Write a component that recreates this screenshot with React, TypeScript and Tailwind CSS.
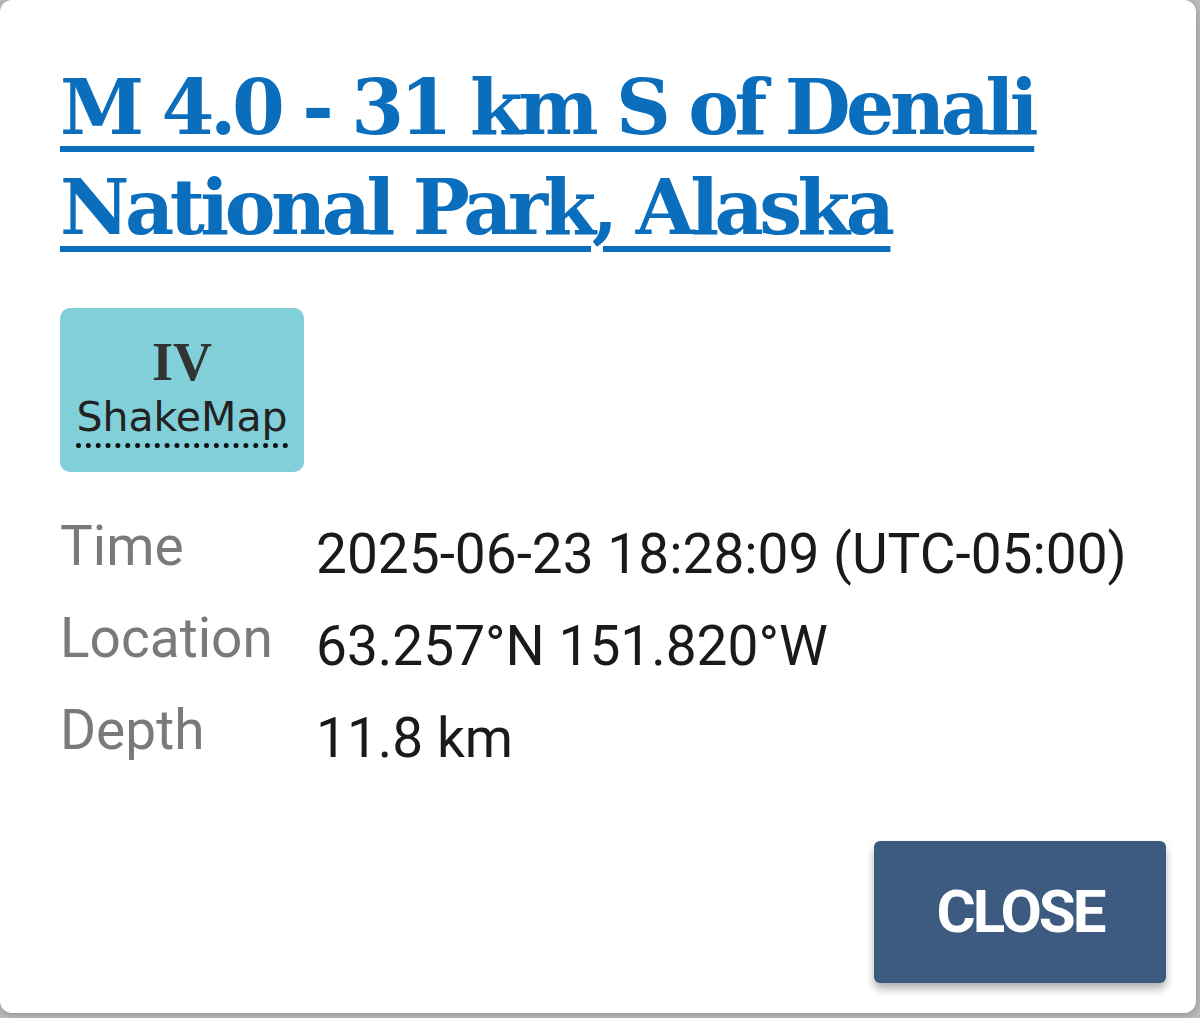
import React from 'react';

const rows = [
  { label: 'Time', value: '2025-06-23 18:28:09 (UTC-05:00)' },
  { label: 'Location', value: '63.257°N 151.820°W' },
  { label: 'Depth', value: '11.8 km' },
];

const App: React.FC = () => {
  return (
    <div className="w-[1200px] h-[1018px] bg-[#bdbdbd] overflow-hidden flex flex-col">
      <div className="w-[1196px] h-[1013px] shrink-0 bg-white rounded-[12px] shadow-[0_2px_8px_rgba(0,0,0,0.25)] px-[60px] pt-[58px] flex flex-col">
        <a
          href="#"
          className="block text-[#0a6ebd] underline decoration-[6px] underline-offset-[12px] font-bold text-[76px] leading-[100px] tracking-[-4.5px]"
          style={{ fontFamily: '"DejaVu Serif", serif' }}
        >
          M 4.0 - 31 km S of Denali National Park, Alaska
        </a>

        <div className="mt-[50px] shrink-0 w-[244px] h-[164px] rounded-[10px] bg-[#80cfd9] flex flex-col items-center justify-center">
          <span
            className="text-[54px] leading-[58px] font-bold text-[#333]"
            style={{ fontFamily: '"Liberation Serif", serif' }}
          >
            IV
          </span>
          <abbr
            title="ShakeMap"
            className="text-[41px] leading-[52px] text-[#222] border-b-[5px] border-dotted border-[#111]"
            style={{ fontFamily: '"DejaVu Sans", sans-serif', textDecoration: 'none' }}
          >
            ShakeMap
          </abbr>
        </div>

        <dl
          className="mt-[38px] grid grid-cols-[256px_1fr] gap-y-[12px] whitespace-nowrap"
          style={{ fontFamily: 'Roboto, sans-serif' }}
        >
          {rows.map((r) => (
            <React.Fragment key={r.label}>
              <dt className="text-[55px] leading-[72px] text-[#7a7a7a]">{r.label}</dt>
              <dd className="text-[55px] leading-[72px] text-[#1a1a1a] pt-[8px]">{r.value}</dd>
            </React.Fragment>
          ))}
        </dl>

        <div className="flex-1 flex items-end justify-end pb-[30px] -mr-[30px]">
          <button
            className="w-[292px] h-[142px] rounded-[6px] bg-[#3d5a80] text-white text-[60px] font-bold tracking-[-3px] shadow-[0_6px_8px_rgba(0,0,0,0.3)]"
            style={{ fontFamily: 'Roboto, Arial, sans-serif' }}
          >
            CLOSE
          </button>
        </div>
      </div>
      <div className="pl-[50px] pt-[1px] text-[30px] leading-[30px] font-bold text-[#111]" style={{ fontFamily: 'Roboto, sans-serif' }}>
        Ma
      </div>
    </div>
  );
};

export default App;
